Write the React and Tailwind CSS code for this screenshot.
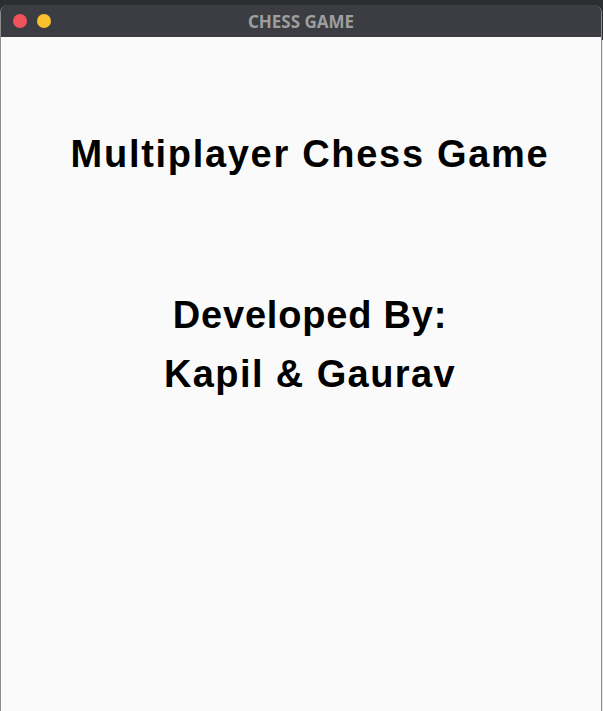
import React from 'react'

const headingFont = { fontFamily: '"Liberation Sans", Arial, sans-serif' }

const App = () => {
  return (
    <div className="flex h-[711px] w-[603px] overflow-hidden bg-[#2b2d31]">
      <div className="mt-[5px] flex w-[602px] flex-col overflow-hidden rounded-t-[8px] border-x border-[#8e8e8e]">
        <div className="relative flex h-[32px] shrink-0 items-center justify-center bg-[#3b3d42]">
          <div className="absolute left-[12px] top-[9px] flex gap-[10px]">
            <span className="h-[14px] w-[14px] rounded-full bg-[#f2525a]" />
            <span className="h-[14px] w-[14px] rounded-full bg-[#fbc12f]" />
          </div>
          <span
            className="pt-[1px] text-[17px] font-bold leading-none text-[#9e9e9e]"
            style={{ fontFamily: '"Noto Sans", "Open Sans", sans-serif' }}
          >
            CHESS GAME
          </span>
        </div>

        <div className="flex flex-1 flex-col items-center bg-[#fafafa] pl-[18px] text-black" style={headingFont}>
          <div className="mt-[98px] text-[38px] font-bold leading-[38px] tracking-[1.7px]">
            Multiplayer Chess Game
          </div>
          <div className="mt-[123px] text-[38px] font-bold leading-[38px] tracking-[0.8px]">
            Developed By:
          </div>
          <div className="mt-[21px] text-[38px] font-bold leading-[38px] tracking-[1.4px]">
            Kapil &amp; Gaurav
          </div>
        </div>
      </div>
      <div className="mt-[40px] w-[1px] bg-[#e6e6e6]" />
    </div>
  )
}

export default App
